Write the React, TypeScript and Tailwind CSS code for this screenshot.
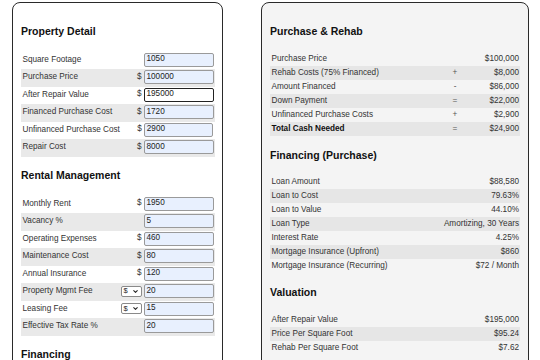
import { ChevronDown } from 'lucide-react';

type InputRow = { label: string; value: string; prefix?: 'dollar' | 'select'; focused?: boolean };
type ResultRow = { label: string; value: string; op?: string; bold?: boolean };

const propertyDetail: InputRow[] = [
  { label: 'Square Footage', value: '1050' },
  { label: 'Purchase Price', value: '100000', prefix: 'dollar' },
  { label: 'After Repair Value', value: '195000', prefix: 'dollar', focused: true },
  { label: 'Financed Purchase Cost', value: '1720', prefix: 'dollar' },
  { label: 'Unfinanced Purchase Cost', value: '2900', prefix: 'dollar' },
  { label: 'Repair Cost', value: '8000', prefix: 'dollar' }
];

const rentalManagement: InputRow[] = [
  { label: 'Monthly Rent', value: '1950', prefix: 'dollar' },
  { label: 'Vacancy %', value: '5' },
  { label: 'Operating Expenses', value: '460', prefix: 'dollar' },
  { label: 'Maintenance Cost', value: '80', prefix: 'dollar' },
  { label: 'Annual Insurance', value: '120', prefix: 'dollar' },
  { label: 'Property Mgmt Fee', value: '20', prefix: 'select' },
  { label: 'Leasing Fee', value: '15', prefix: 'select' },
  { label: 'Effective Tax Rate %', value: '20' }
];

const financing: InputRow[] = [
  { label: 'Down Payment %', value: '3.5' },
  { label: 'Interest Rate %', value: '4.25' },
  { label: 'Loan Term (Years)', value: '30' }
];

const purchaseRehab: ResultRow[] = [
  { label: 'Purchase Price', value: '$100,000' },
  { label: 'Rehab Costs (75% Financed)', op: '+', value: '$8,000' },
  { label: 'Amount Financed', op: '-', value: '$86,000' },
  { label: 'Down Payment', op: '=', value: '$22,000' },
  { label: 'Unfinanced Purchase Costs', op: '+', value: '$2,900' },
  { label: 'Total Cash Needed', op: '=', value: '$24,900', bold: true }
];

const financingPurchase: ResultRow[] = [
  { label: 'Loan Amount', value: '$88,580' },
  { label: 'Loan to Cost', value: '79.63%' },
  { label: 'Loan to Value', value: '44.10%' },
  { label: 'Loan Type', value: 'Amortizing, 30 Years' },
  { label: 'Interest Rate', value: '4.25%' },
  { label: 'Mortgage Insurance (Upfront)', value: '$860' },
  { label: 'Mortgage Insurance (Recurring)', value: '$72 / Month' }
];

const valuation: ResultRow[] = [
  { label: 'After Repair Value', value: '$195,000' },
  { label: 'Price Per Square Foot', value: '$95.24' },
  { label: 'Rehab Per Square Foot', value: '$7.62' }
];

function InputSection({ title, rows, first }: { title: string; rows: InputRow[]; first?: boolean }) {
  return (
    <div>
      <h2 className={`${first ? '' : 'mt-[12.5px]'} mb-[14.5px] text-[10.5px] leading-[12px] font-bold text-[#111]`}>{title}</h2>
      {rows.map((row, i) => (
        <div
          key={row.label}
          className={`flex items-start h-[17.5px] pt-[1px] pl-[1.5px] pr-[1.5px] ${i % 2 === 1 ? 'bg-[#e9e9e9]' : ''}`}
        >
          <span className="flex-1 text-[8.2px] leading-[13px] text-[#333] whitespace-nowrap">{row.label}</span>
          <div className="w-[24px] h-[14px] flex items-center justify-end pr-[2px]">
            {row.prefix === 'dollar' && <span className="text-[8.2px] text-[#333]">$</span>}
            {row.prefix === 'select' && (
              <div className="w-[21px] h-[11px] flex items-center justify-between px-[2px] bg-white border border-[#8a8a8a] rounded-[2px]">
                <span className="text-[7.5px] leading-none text-[#222]">$</span>
                <ChevronDown size={7} strokeWidth={3.5} className="text-[#222]" />
              </div>
            )}
          </div>
          <div
            className={`w-[70px] h-[14px] flex items-center pl-[2px] text-[8.2px] text-[#222] rounded-[2px] ${
              row.focused ? 'bg-white border-[1.5px] border-[#222]' : 'bg-[#e8f0fe] border border-[#9a9a9a]'
            }`}
          >
            {row.value}
          </div>
        </div>
      ))}
    </div>
  );
}

function ResultSection({ title, rows, first }: { title: string; rows: ResultRow[]; first?: boolean }) {
  return (
    <div>
      <h2 className={`${first ? '' : 'mt-[13px]'} mb-[14.5px] text-[10.5px] leading-[12px] font-bold text-[#111]`}>{title}</h2>
      {rows.map((row, i) => (
        <div
          key={row.label}
          className={`flex items-center h-[14px] pl-[1.5px] pr-[1px] text-[8.2px] leading-[14px] text-[#333] whitespace-nowrap ${
            i % 2 === 1 ? 'bg-[#e6e6e6]' : ''
          }`}
        >
          <span className={`flex-1 ${row.bold ? 'font-bold text-[#111]' : ''}`}>{row.label}</span>
          {row.op !== undefined ? (
            <>
              <span className="w-[20px] text-center text-[#555]">{row.op}</span>
              <span className="w-[54px] text-right">{row.value}</span>
            </>
          ) : (
            <span className="text-right">{row.value}</span>
          )}
        </div>
      ))}
    </div>
  );
}

export default function App() {
  return (
    <div
      className="min-h-screen bg-white flex items-start gap-[38px] pl-[12px] pt-[2px]"
      style={{ fontFamily: '"Liberation Sans", Arial, sans-serif' }}
    >
      <div className="w-[211px] border border-[#2a2a2a] rounded-[8px] bg-white pt-[22px] pb-[16px] pl-[8px] pr-[7px]">
        <InputSection title="Property Detail" rows={propertyDetail} first />
        <InputSection title="Rental Management" rows={rentalManagement} />
        <InputSection title="Financing" rows={financing} />
      </div>

      <div className="w-[268px] border border-[#2a2a2a] rounded-[8px] bg-[#f4f4f4] pt-[22px] pb-[16px] pl-[8px] pr-[8px]">
        <ResultSection title="Purchase & Rehab" rows={purchaseRehab} first />
        <ResultSection title="Financing (Purchase)" rows={financingPurchase} />
        <ResultSection title="Valuation" rows={valuation} />
      </div>
    </div>
  );
}
